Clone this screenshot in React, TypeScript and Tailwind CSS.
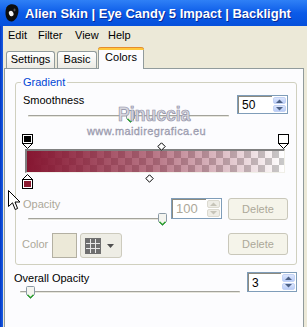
import React from 'react';

const font = "font-['Liberation_Sans',Arial,sans-serif]";

function AlienIcon() {
  return (
    <svg width="14" height="18" viewBox="0 0 14 18">
      <path d="M2.5 2 C5 -0.5 11 -0.5 13 4 C14.5 8 12 16.5 7 17.5 C3 18 0.5 14 0.5 9 C0.5 6 1 3.5 2.5 2 Z" fill="#0d0d0d" />
      <ellipse cx="6.2" cy="9.5" rx="2.2" ry="2.8" fill="#f2f2f2" transform="rotate(-25 6.2 9.5)" />
      <ellipse cx="9.5" cy="6" rx="1" ry="1.4" fill="#555" />
    </svg>
  );
}

function Arrow({ up, color }: { up?: boolean; color: string }) {
  return (
    <svg width="7" height="4" viewBox="0 0 7 4">
      <path d={up ? 'M0 4 L3.5 0.5 L7 4 Z' : 'M0 0 L3.5 3.5 L7 0 Z'} fill={color} />
    </svg>
  );
}

function NumberBox({
  value,
  className,
  disabled,
  textSize = 'text-[12px]',
}: {
  value: string;
  className: string;
  disabled?: boolean;
  textSize?: string;
}) {
  const half = disabled
    ? 'bg-[#EEEDE6] border-[#DCDAD0]'
    : 'bg-linear-to-b from-[#DCE6FD] to-[#B9CCF7] border-[#C3D2F4]';
  const arrow = disabled ? '#C6C4B8' : '#4D6185';
  return (
    <div className={`flex border border-[#7F9DB9] bg-white ${className}`}>
      <div
        className={`flex-1 flex items-center pl-[3px] border-t border-l border-t-[#8C8A7F] border-l-[#8C8A7F] ${textSize} ${
          disabled ? 'text-[#ACA899]' : 'text-black'
        }`}
      >
        {value}
      </div>
      <div className="w-[15px] flex flex-col gap-px p-px">
        <div className={`flex-1 flex items-center justify-center border rounded-[2px] ${half}`}>
          <Arrow up color={arrow} />
        </div>
        <div className={`flex-1 flex items-center justify-center border rounded-[2px] ${half}`}>
          <Arrow color={arrow} />
        </div>
      </div>
    </div>
  );
}

function Thumb({ className }: { className: string }) {
  return (
    <svg width="9" height="13" viewBox="0 0 9 13" className={`absolute ${className}`}>
      <path d="M1.5 0.5 H7.5 Q8.5 0.5 8.5 1.5 V8.5 L4.5 12.5 L0.5 8.5 V1.5 Q0.5 0.5 1.5 0.5 Z" fill="#F4F4EF" stroke="#8B9AA6" />
      <path d="M1.5 8.8 L4.5 11.6 L7.5 8.8" fill="none" stroke="#21A121" strokeWidth="1.2" />
    </svg>
  );
}

function Track({ className }: { className: string }) {
  return <div className={`h-[3px] rounded-[1px] border-t border-[#A3A39B] bg-[#E6E5DD] border-b border-b-white ${className}`} />;
}

function DisabledButton({ className }: { className: string }) {
  return (
    <div
      className={`flex items-center justify-center rounded-[3px] border border-[#C9C7BA] bg-[#F5F4EA] text-[#ACA899] ${className}`}
    >
      Delete
    </div>
  );
}

function Stop({ fill, bottom }: { fill: string; bottom?: boolean }) {
  return bottom ? (
    <svg width="11" height="15" viewBox="0 0 11 15">
      <path d="M0.5 5.5 L5.5 0.5 L10.5 5.5 Z" fill="#fff" stroke="#000" />
      <rect x="0.5" y="5.5" width="10" height="9" fill="#fff" stroke="#000" />
      <rect x="2" y="7" width="7" height="6" fill={fill} />
    </svg>
  ) : (
    <svg width="11" height="15" viewBox="0 0 11 15">
      <rect x="0.5" y="0.5" width="10" height="9" fill="#fff" stroke="#000" />
      <rect x="2" y="2" width="7" height="6" fill={fill} />
      <path d="M0.5 9.5 L5.5 14.5 L10.5 9.5 Z" fill="#fff" stroke="#000" />
    </svg>
  );
}

function Diamond({ className }: { className: string }) {
  return (
    <svg width="9" height="9" viewBox="0 0 9 9" className={`absolute ${className}`}>
      <path d="M4.5 0.8 L8.2 4.5 L4.5 8.2 L0.8 4.5 Z" fill="#fff" stroke="#000" />
    </svg>
  );
}

export default function App() {
  return (
    <div className={`relative w-[307px] h-[327px] overflow-hidden bg-[#ECE9D8] flex flex-col ${font} text-[11px] text-black`}>
      <div className="h-[26px] shrink-0 flex items-center pl-[5px] bg-linear-to-b from-[#2F80F6] via-[#0B5BE8] to-[#0650DB]">
        <AlienIcon />
        <span className="ml-[6px] pt-[1px] text-white font-bold text-[13px] leading-[13px] [text-shadow:1px_1px_0_#0A2A96]">
          Alien Skin | Eye Candy 5 Impact | Backlight
        </span>
      </div>

      <div className="flex flex-1 min-h-0">
        <div className="w-[3px] bg-linear-to-r from-[#0436C4] to-[#1B5EE4]" />
        <div className="flex-1 flex flex-col min-w-0">
          <div className="h-[18px] shrink-0 flex items-center pl-[5px]">
            <span className="w-[30px]">Edit</span>
            <span className="w-[37px]">Filter</span>
            <span className="w-[33px]">View</span>
            <span>Help</span>
          </div>

          <div className="h-[24px] shrink-0 flex items-end pl-[3px]">
            <div className="w-[49px] h-[17px] pt-[1px] leading-[13px] text-center border border-b-0 border-[#919B9C] rounded-t-[3px] bg-linear-to-b from-white to-[#ECEBE4]">
              Settings
            </div>
            <div className="ml-[2px] w-[40px] h-[17px] pt-[1px] leading-[13px] text-center border border-b-0 border-[#919B9C] rounded-t-[3px] bg-linear-to-b from-white to-[#ECEBE4]">
              Basic
            </div>
            <div className="relative z-10 -mb-px ml-px w-[46px] h-[22px] flex flex-col border-x border-[#919B9C] rounded-t-[3px] bg-[#FCFCFE]">
              <div className="-mx-px h-[3px] rounded-t-[3px] border-t border-[#E68B2C] bg-[#FFC83C]" />
              <div className="pt-[1px] leading-[13px] text-center">Colors</div>
            </div>
          </div>

          <div className="flex-1 ml-px w-[300px] border border-b-0 border-[#919B9C] bg-[#FCFCFE] flex flex-col">
            <fieldset className="mt-[7px] ml-[10px] mr-[6px] border border-[#D0D0BF] rounded-[3px] pb-[6px]">
              <legend className="ml-[5px] px-[2px] leading-[13px] text-[#0046D5]">Gradient</legend>

              <div className="flex items-start mt-[5px]">
                <div className="flex-1 pl-[7px]">
                  <div className="leading-[13px]">Smoothness</div>
                  <div className="relative pt-[8px] pb-[7px] ml-[5px] mr-[8px]">
                    <Track className="w-full" />
                    <Thumb className="top-[3px] left-[98px]" />
                  </div>
                </div>
                <NumberBox value="50" className="mt-px mr-[8px] w-[51px] h-[19px]" />
              </div>

              <div className="relative mt-[9px] ml-[6px] w-[268px]">
                <div className="h-[15px] flex justify-between pr-px">
                  <Stop fill="#000" />
                  <Stop fill="#fff" />
                </div>
                <div className="ml-[3px] w-[260px] h-[24px] border-t-2 border-l-2 border-[#808080] border-r border-b border-r-[#F0EFE8] border-b-[#F0EFE8] bg-[image:conic-gradient(#c9c9c9_25%,#ffffff_0_50%,#c9c9c9_0_75%,#ffffff_0)] bg-[length:14px_14px]">
                  <div className="h-full w-full bg-linear-to-r from-[#861631] via-[#86163194] to-[#86163100]" />
                </div>
                <div className="h-[17px] pt-[1px]">
                  <Stop fill="#8B1A30" bottom />
                </div>
                <Diamond className="top-[8px] left-[135px]" />
                <Diamond className="top-[40px] left-[123px]" />
              </div>

              <div className="flex items-start mt-[8px]">
                <div className="w-[155px] pl-[7px]">
                  <div className="leading-[13px] text-[#ACA899]">Opacity</div>
                  <div className="relative pt-[7px] pb-[4px] ml-[5px]">
                    <Track className="w-[132px]" />
                    <Thumb className="top-[2px] left-[130px]" />
                  </div>
                </div>
                <NumberBox value="100" disabled textSize="text-[13px]" className="w-[51px] h-[21px]" />
                <DisabledButton className="ml-[6px] w-[60px] h-[22px]" />
              </div>

              <div className="flex items-start mt-[8px]">
                <span className="ml-[6px] mt-[5px] w-[30px] leading-[13px] text-[#ACA899]">Color</span>
                <div className="w-[25px] h-[25px] border border-[#B3B0A2] bg-[#ECE9D8]" />
                <div className="ml-[3px] w-[42px] h-[25px] flex items-center pl-[4px] gap-[6px] rounded-[3px] border border-[#CDCBBE] bg-[#EEEDE5]">
                  <svg width="16" height="16" viewBox="0 0 16 16">
                    <rect x="0" y="0" width="16" height="16" fill="#6F6F6F" />
                    <path d="M5.5 1 V15 M10.5 1 V15 M1 5.5 H15 M1 10.5 H15" stroke="#E8E8E8" />
                  </svg>
                  <svg width="7" height="4" viewBox="0 0 7 4">
                    <path d="M0 0 L3.5 4 L7 0 Z" fill="#4F4F4F" />
                  </svg>
                </div>
                <DisabledButton className="ml-auto mr-[8px] w-[60px] h-[22px]" />
              </div>
            </fieldset>

            <div className="flex items-start mt-[7px]">
              <div className="w-[242px] pl-[9px]">
                <div className="leading-[13px]">Overall Opacity</div>
                <div className="relative pt-[6px] ml-[6px] w-[220px]">
                  <Track className="w-full" />
                  <Thumb className="top-[1px] left-[6px]" />
                </div>
              </div>
              <NumberBox value="3" className="w-[50px] h-[20px]" />
            </div>
          </div>
        </div>
      </div>

      <div className="absolute left-[118px] top-[104px] origin-left scale-x-[0.88] text-[20px] leading-[20px] font-bold text-[#D6D6DE] [-webkit-text-stroke:0.7px_#8E8EA4] pointer-events-none">
        Pinuccia
      </div>
      <div className="absolute left-[87px] top-[126px] text-[11px] leading-[11px] tracking-[0.4px] text-[#A8A8BA] [-webkit-text-stroke:0.3px_#9090A4] pointer-events-none">
        www.maidiregrafica.eu
      </div>

      <svg width="13" height="21" viewBox="0 0 13 21" className="absolute left-[8px] top-[190px]">
        <path d="M0.5 0.5 V16.5 L4.5 12.8 L7.2 19.5 L9.6 18.5 L7 12 H12 Z" fill="#fff" stroke="#000" />
      </svg>
    </div>
  );
}
